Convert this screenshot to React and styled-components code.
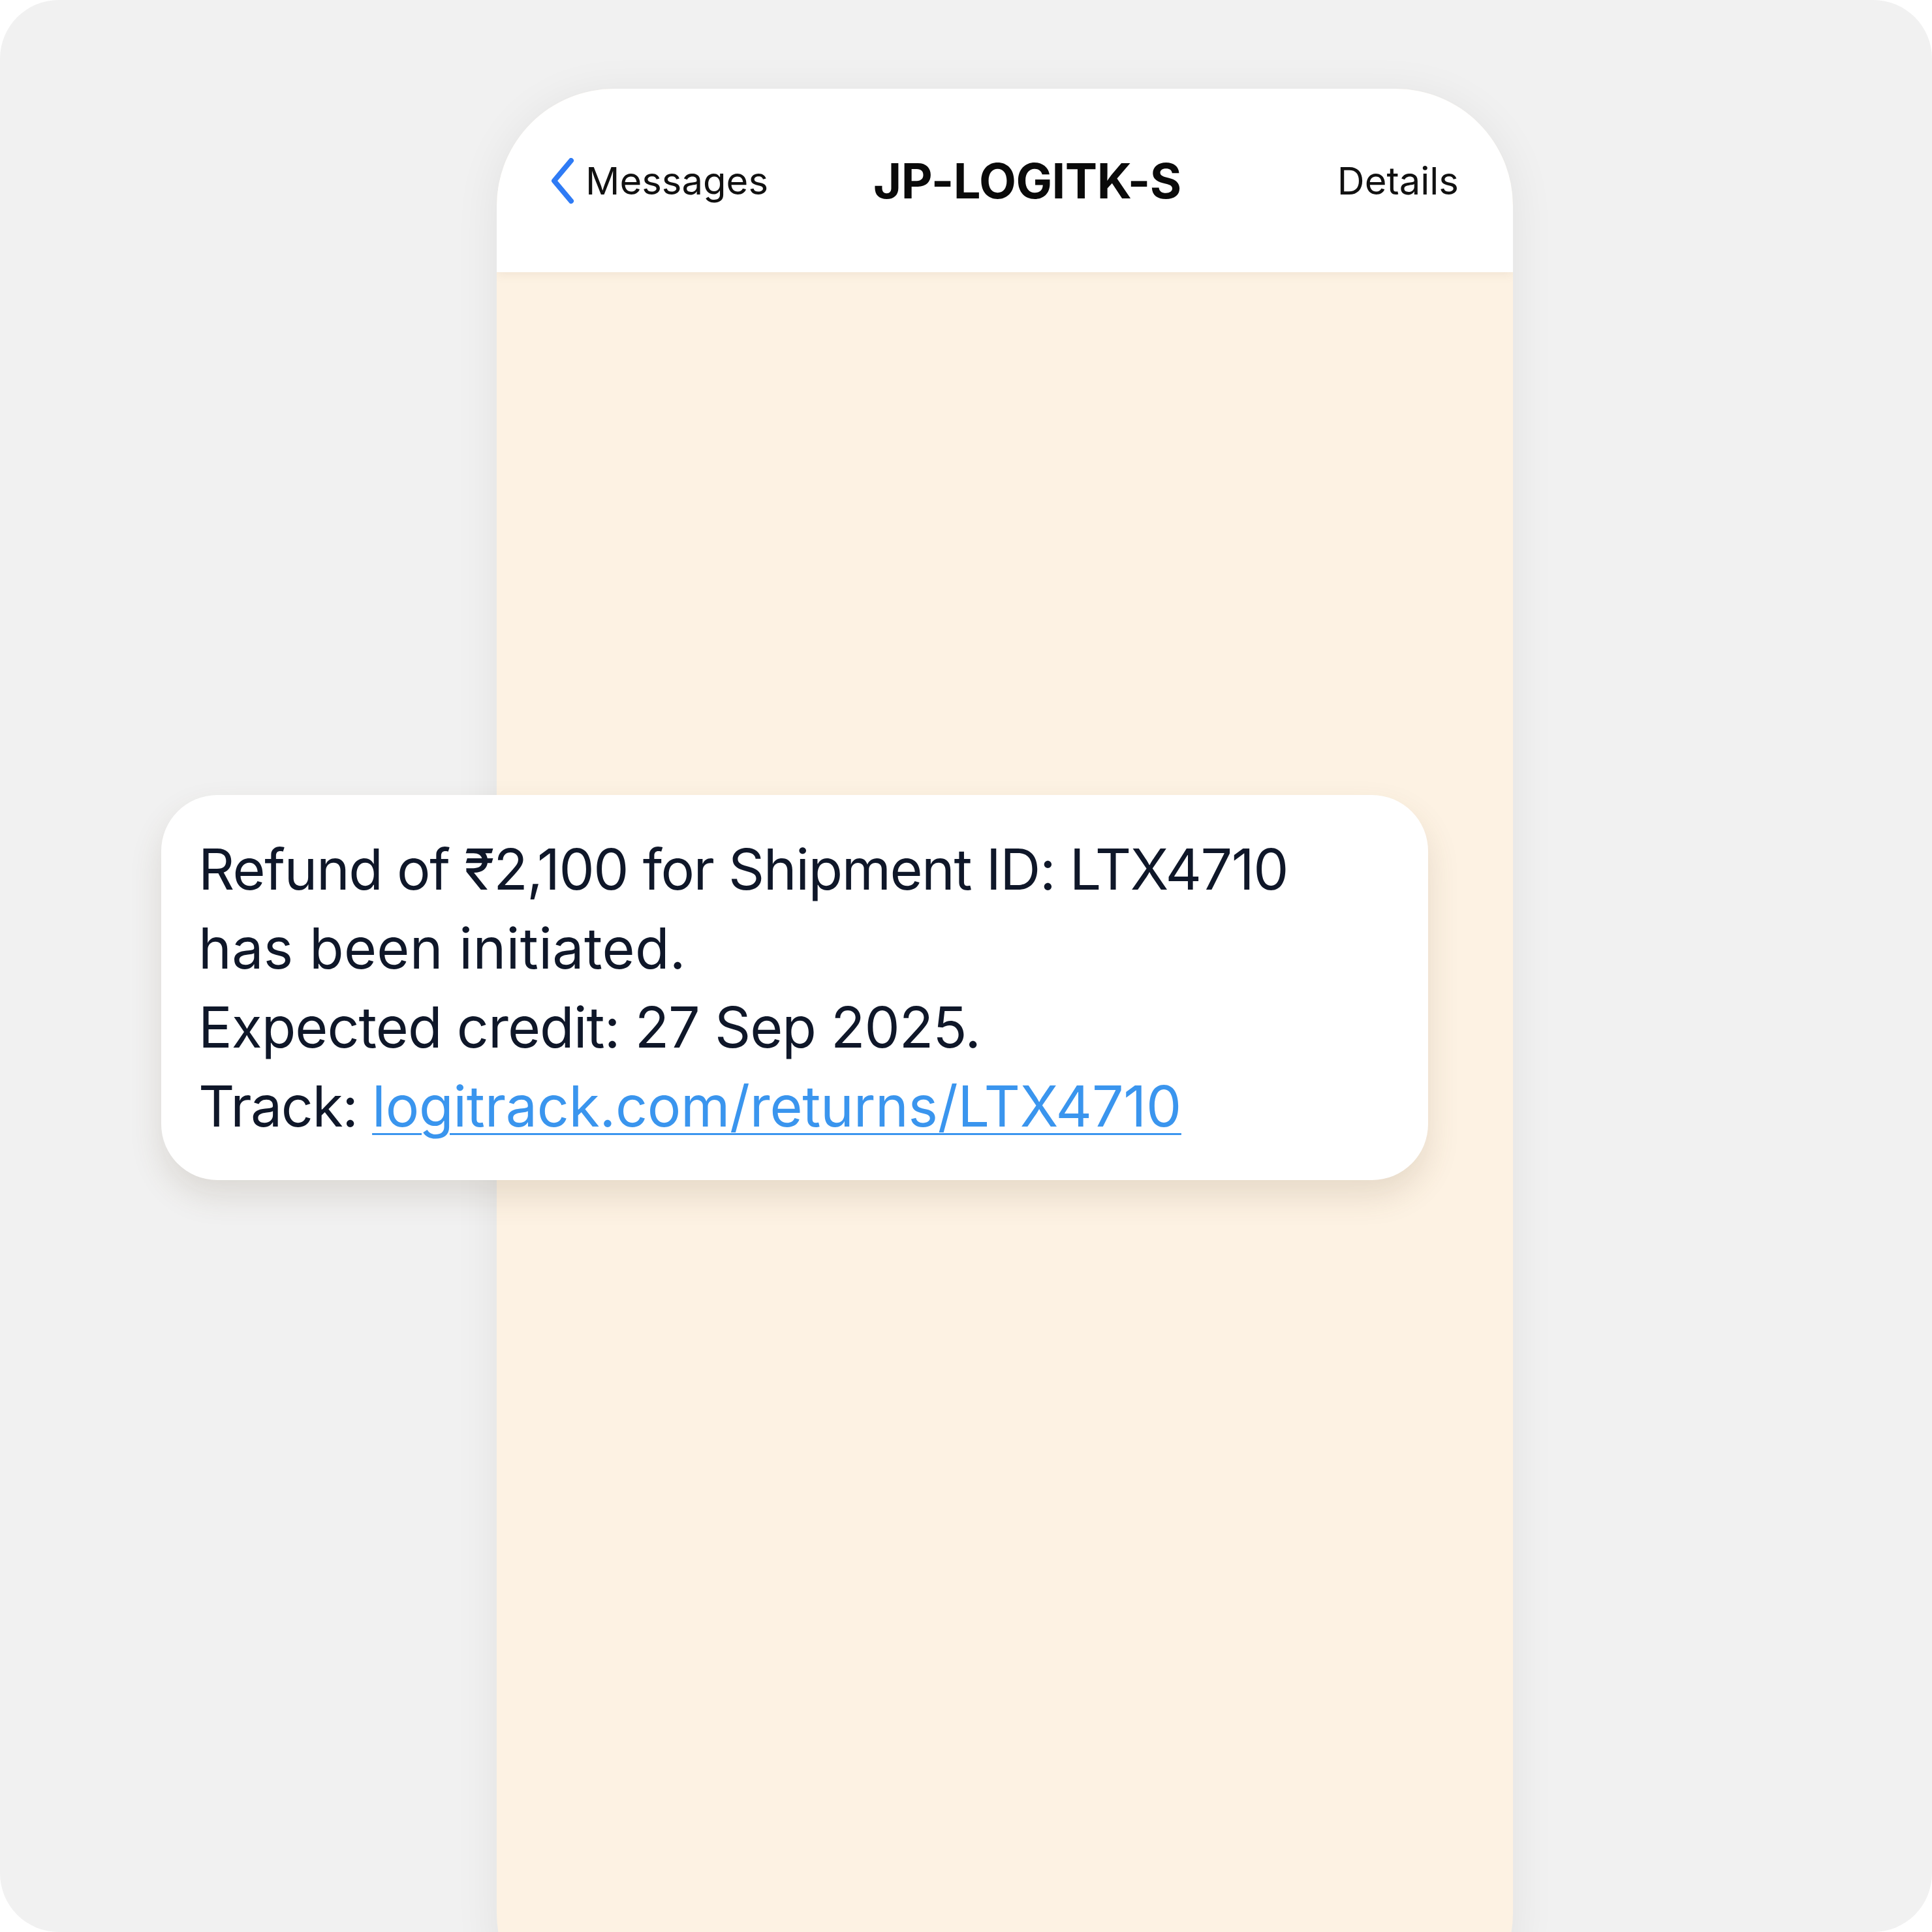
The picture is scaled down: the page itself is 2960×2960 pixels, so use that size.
import React from "react";
import styled, {createGlobalStyle} from "styled-components";

const GlobalStyle = createGlobalStyle`
  html, body {
    margin: 0;
    padding: 0;
    background: #ffffff;
  }
  body {
    font-family: "Inter", "Noto Sans", sans-serif;
  }
`

const Stage = styled.div`
  position: relative;
  width: 2960px;
  height: 2960px;
  background: #f1f1f1;
  border-radius: 90px;
  overflow: hidden;
  padding-top: 136px;
  box-sizing: border-box;
`

const Phone = styled.div`
  margin-left: 761px;
  width: 1557px;
  height: 2975px;
  border-radius: 180px;
  background: #fdf2e3;
  overflow: hidden;
  box-shadow: 0 10px 70px rgba(0, 0, 0, 0.07);
  display: flex;
  flex-direction: column;
`

const Header = styled.div`
  height: 281px;
  flex-shrink: 0;
  background: #ffffff;
  box-sizing: border-box;
  padding: 0 83px 0 80px;
  display: grid;
  grid-template-columns: auto 1fr auto;
  align-items: center;
  box-shadow: 0 4px 14px rgba(120, 100, 70, 0.09);
  position: relative;
  z-index: 1;
`

const Back = styled.div`
  display: flex;
  align-items: center;
  gap: 16px;
  color: #111111;
  font-size: 58px;
  font-weight: 400;
`

const Title = styled.div`
  text-align: center;
  font-size: 74px;
  font-weight: 700;
  color: #0a0a0a;
  letter-spacing: -0.5px;
  margin-right: 78px;
`

const HeaderLink = styled.div`
  font-size: 58px;
  font-weight: 400;
  color: #111111;
`

const Body = styled.div`
  flex: 1;
`

const Bubble = styled.div`
  position: absolute;
  left: 247px;
  top: 1218px;
  width: 1941px;
  height: 590px;
  box-sizing: border-box;
  background: #ffffff;
  border-radius: 86px;
  padding: 54px 57px 0;
  box-shadow: 0 24px 50px rgba(90, 70, 40, 0.14);
  font-size: 86px;
  line-height: 121px;
  color: #0f1729;
  letter-spacing: -1.5px;
`

const Line = styled.div`
  white-space: nowrap;
  letter-spacing: ${props => props.$spacing || "-1.5px"};
`

const Link = styled.a`
  color: #3a95ee;
  letter-spacing: -0.3px;
  text-decoration: underline;
  text-decoration-thickness: 3px;
  text-underline-offset: 10px;
`

const Chevron = () => (
    <svg width="40" height="70" viewBox="0 0 40 70">
        <path d="M34 4 L8 35 L34 66" fill="none" stroke="#2f7bf5" strokeWidth="8" strokeLinecap="round" strokeLinejoin="round"/>
    </svg>
)

const App = () => {
    return (
        <>
            <GlobalStyle/>
            <Stage>
                <Phone>
                    <Header>
                        <Back>
                            <Chevron/>
                            <span>Messages</span>
                        </Back>
                        <Title>JP-LOGITK-S</Title>
                        <HeaderLink>Details</HeaderLink>
                    </Header>
                    <Body/>
                </Phone>
                <Bubble>
                    <Line>Refund of ₹2,100 for Shipment ID: LTX4710</Line>
                    <Line $spacing="0.3px">has been initiated.</Line>
                    <Line $spacing="-1px">Expected credit: 27 Sep 2025.</Line>
                    <Line>Track: <Link href="#">logitrack.com/returns/LTX4710</Link></Line>
                </Bubble>
            </Stage>
        </>
    )
}

export default App
